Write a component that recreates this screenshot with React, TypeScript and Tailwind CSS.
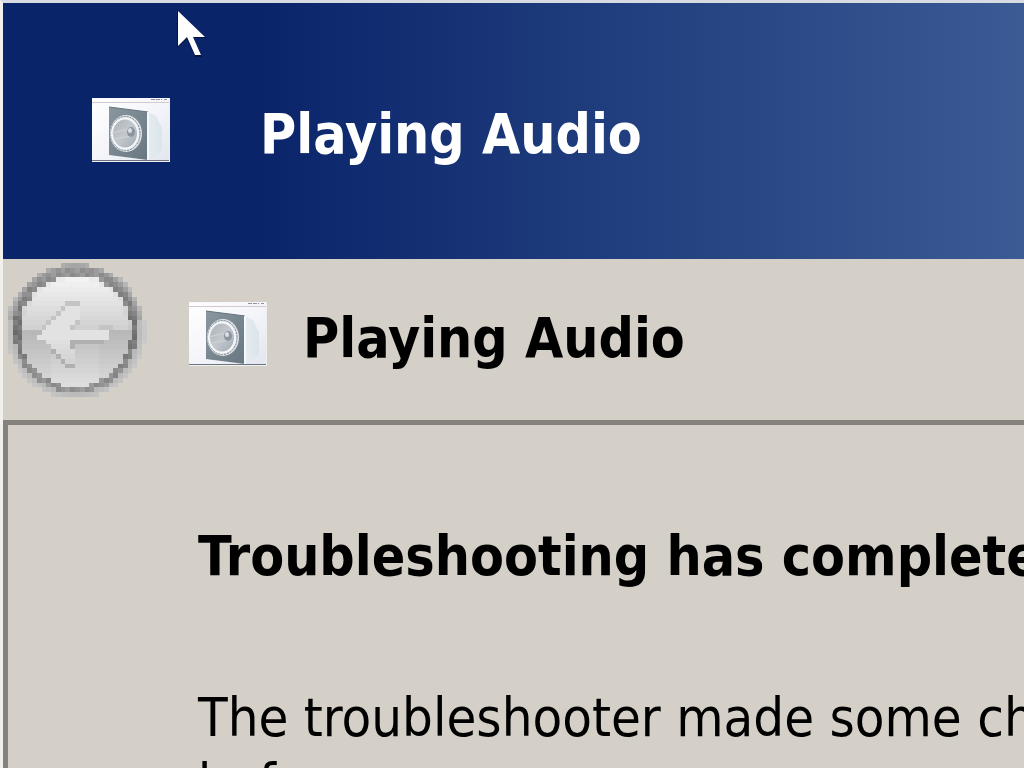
interface IconProps {
  className?: string;
}

function SpeakerIcon({ className }: IconProps) {
  return (
    <svg viewBox="0 0 78 64" className={className} aria-hidden="true">
      <defs>
        <linearGradient id="paper" x1="0" y1="0" x2="1" y2="1">
          <stop offset="0" stopColor="#ffffff" />
          <stop offset="0.55" stopColor="#f3f4f9" />
          <stop offset="1" stopColor="#e2e5ee" />
        </linearGradient>
        <linearGradient id="front" x1="0" y1="0" x2="1" y2="1">
          <stop offset="0" stopColor="#8a979f" />
          <stop offset="1" stopColor="#687680" />
        </linearGradient>
        <linearGradient id="side" x1="0" y1="0" x2="1" y2="0">
          <stop offset="0" stopColor="#ccd7df" />
          <stop offset="0.3" stopColor="#f3f7f9" />
          <stop offset="1" stopColor="#dbe5ea" />
        </linearGradient>
        <linearGradient id="cone" x1="0" y1="0" x2="1" y2="1">
          <stop offset="0" stopColor="#aab1b7" />
          <stop offset="0.5" stopColor="#c3c8ce" />
          <stop offset="1" stopColor="#9ea8b0" />
        </linearGradient>
      </defs>
      <rect width="78" height="64" fill="url(#paper)" />
      <path d="M0 .5h78" stroke="#f8f8fb" />
      <path d="M0 4.500h78" stroke="#d5c9d0" />
      <path d="M59 1.500h11M72 1.500h3" stroke="#8d909a" strokeDasharray="4 1" />
      <path d="M17 9l39 5 8 4 6 12v22l-8 8-6 2-37-5z" fill="url(#side)" />
      <path d="M17 9l39 5v48l-39-5z" fill="url(#front)" />
      <path d="M17 9l39 5" stroke="#65737d" />
      <path d="M56 14v48" stroke="#f5f9fb" strokeWidth="2" />
      <ellipse cx="34" cy="35.500" rx="16" ry="18.500" fill="#dfe4e8" />
      <ellipse cx="33.500" cy="35.500" rx="14.500" ry="17" fill="none" stroke="#71818c" strokeDasharray="2 1" />
      <ellipse cx="33" cy="35.500" rx="13" ry="15" fill="url(#cone)" stroke="#f4f6f8" strokeWidth="2" />
      <path d="M20 35l20-5M21 41l19-3" stroke="#d1d5d8" strokeWidth="1" />
      <ellipse cx="39" cy="34" rx="4" ry="5" fill="#8b969e" />
      <ellipse cx="38" cy="32.500" rx="2" ry="2.500" fill="#dce0e2" />
      <path d="M0 62.500h78" stroke="#6d7480" />
      <path d="M0 63.500h78" stroke="#f0f1f4" />
      <path d="M77.500 0v64" stroke="#eeeef2" />
    </svg>
  );
}

// [row, first column, last column] of the arrow on the 30 x 28 grid
const ARROW = [
  [9, 13, 15],
  [10, 12, 15],
  [11, 11, 15],
  [12, 10, 14],
  [13, 9, 13],
  [14, 8, 21],
  [15, 7, 21],
  [16, 9, 13],
  [17, 10, 13],
  [18, 11, 14],
  [19, 12, 14],
  [20, 13, 14],
];

const ARROW_SHADE = [
  [8, 13, 15],
  [9, 12, 12],
  [10, 11, 11],
  [11, 10, 10],
  [12, 9, 9],
  [12, 15, 15],
  [13, 8, 8],
  [13, 14, 14],
  [13, 20, 22],
  [16, 14, 20],
  [17, 14, 14],
  [18, 10, 10],
  [19, 11, 11],
  [20, 12, 12],
  [21, 13, 14],
];

function inRuns(runs: number[][], x: number, y: number) {
  return runs.some(([row, from, to]) => row === y && x >= from && x <= to);
}

function gray(v: number) {
  const n = Math.round(v);
  return `rgb(${n - 1},${n},${n - 1})`;
}

function cellColor(x: number, y: number) {
  const dx = x + 0.5 - 15.1;
  const dy = y + 0.5 - 14.2;
  const d = Math.sqrt(dx * dx + dy * dy);
  const halo = Math.sqrt(dx * dx + dy * dy * 1.08);
  if (halo > 14.6) return null;
  if (d > 13) {
    const fade = (d - 13) / 1.8;
    const base = y < 12 ? 140 : 184;
    return gray(base + (204 - base) * fade);
  }
  if (d > 11.6) {
    const level = Math.abs(dy) / 13;
    return gray(106 + level * 36 + ((x * 7 + y * 5) % 3) * 9);
  }
  if (inRuns(ARROW, x, y)) return gray(y > 15 ? 226 - (y - 15) * 3 : 226);
  if (inRuns(ARROW_SHADE, x, y)) return gray(y < 14 ? 196 : 176);
  if (y < 14) return gray(246 - Math.max(0, y - 2) * 3.4 - (d > 11 ? 8 : 0));
  return gray(184 + (y - 14) * 3 + (Math.abs(dx) < 5 ? 5 : 0));
}

function BackIcon({ className }: IconProps) {
  const cells = [];
  for (let y = 0; y < 28; y++) {
    for (let x = 0; x < 30; x++) {
      const fill = cellColor(x, y);
      if (fill) cells.push(<rect key={`${x}:${y}`} x={x} y={y} width="1" height="1" fill={fill} />);
    }
  }
  return (
    <svg viewBox="0 0 30 28" className={className} shapeRendering="crispEdges" aria-hidden="true">
      {cells}
    </svg>
  );
}

function Pointer() {
  return (
    <svg viewBox="0 0 30 48" className="absolute left-[174px] top-[7px] w-[30px] h-12" aria-hidden="true">
      <path d="M0 0v38l10-9 8 18h7l-8-19h12z" fill="#061440" />
      <path d="M1 1v35l9-9 8 18h6l-8-18h12z" fill="#ffffff" />
    </svg>
  );
}

export default function App() {
  return (
    <div className="relative h-screen overflow-hidden flex flex-col bg-[#d4d0c8] border-l-3 border-t-3 border-l-[#f2f0ec] border-t-[#d9dbe3] font-['DejaVu_Sans_Condensed','DejaVu_Sans',sans-serif] text-[55px] leading-[66px] text-black whitespace-nowrap">
      <div className="h-64 shrink-0 flex items-start pl-[89px] pt-[95px] bg-linear-to-r from-[#0a246a] from-25% to-[#3c5a94] text-white font-bold">
        <SpeakerIcon className="w-[78px] h-16 shrink-0" />
        <span className="pl-[90px] pt-[3px]">Playing Audio</span>
      </div>

      <header className="h-[161px] shrink-0 flex items-start">
        <button type="button" aria-label="Back" className="shrink-0 pt-1">
          <BackIcon className="w-36 h-[134px]" />
        </button>
        <div className="flex items-start pl-[42px] pt-[43px]">
          <SpeakerIcon className="w-[78px] h-16 shrink-0" />
          <h1 className="pl-9 pt-[3px] font-bold">Playing Audio</h1>
        </div>
      </header>

      <main className="flex-1 min-h-0 border-l-5 border-t-5 border-[#85827d] pl-[190px] pt-[98px]">
        <h2 className="font-bold">Troubleshooting has completed</h2>
        <p className="pt-24 text-[54px]">
          The troubleshooter made some changes to your system. Try attempting the task you were trying to do
          <br />
          before.
        </p>
      </main>

      <Pointer />
    </div>
  );
}
